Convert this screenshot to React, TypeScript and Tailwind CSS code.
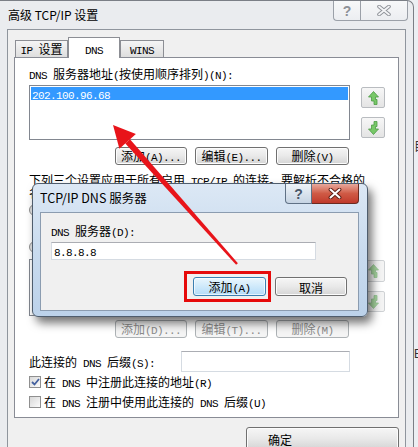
import React from "react";

function T({ s, className = "" }: { s: string; className?: string }) {
  const parts = s.split(/([\x20-\x7E]+)/).filter((p) => p.length > 0);
  return (
    <span className={`whitespace-pre ${className}`}>
      {parts.map((p, i) =>
        /^[\x20-\x7E]+$/.test(p) ? (
          <span key={i} className="font-['Liberation_Mono',monospace] text-[11px] tracking-[-0.6px]">
            {p}
          </span>
        ) : (
          <span key={i} className="font-['Noto_Sans_CJK_SC',sans-serif] text-[12px]">
            {p}
          </span>
        )
      )}
    </span>
  );
}

function Btn({
  s,
  cls,
  disabled = false,
  primary = false,
}: {
  s: string;
  cls: string;
  disabled?: boolean;
  primary?: boolean;
}) {
  const look = disabled
    ? "border-[#adb2b5] bg-[#f4f4f4] text-[#8a8a8a]"
    : primary
    ? "border-[#3c7fb1] bg-linear-to-b from-[#eaf6fd] to-[#b3dcf8] shadow-[inset_0_0_0_1px_#ffffffaa] text-black"
    : "border-[#707070] bg-linear-to-b from-[#f6f6f6] via-[#e9e9e9] to-[#d5d5d5] shadow-[inset_0_0_0_1px_#fcfcfc] text-black";
  return (
    <div className={`shrink-0 rounded-[3px] border flex items-center justify-center leading-[12px] ${cls} ${look}`}>
      <T s={s} />
    </div>
  );
}

function UpIcon({ faded = false }: { faded?: boolean }) {
  return (
    <svg width="11" height="14" viewBox="0 0 11 14">
      <path
        d="M5.5 0.5 L10.5 6 L7.5 6 L7.5 8.5 L9 8.5 L9 13.5 L6 13.5 L6 10 L3.5 10 L3.5 6 L0.5 6 Z"
        fill={faded ? "#a8d8a0" : "#78c868"}
        stroke={faded ? "#97c695" : "#4b9a45"}
        strokeWidth="0.8"
      />
    </svg>
  );
}

function DownIcon({ faded = false }: { faded?: boolean }) {
  return (
    <svg width="11" height="14" viewBox="0 0 11 14">
      <path
        d="M5.5 13.5 L10.5 8 L7.5 8 L7.5 5.5 L9 5.5 L9 0.5 L6 0.5 L6 4 L3.5 4 L3.5 8 L0.5 8 Z"
        fill={faded ? "#a8d8a0" : "#78c868"}
        stroke={faded ? "#97c695" : "#4b9a45"}
        strokeWidth="0.8"
      />
    </svg>
  );
}

function ArrowBtn({ up, faded = false, cls }: { up: boolean; faded?: boolean; cls: string }) {
  return (
    <div
      className={`w-[24px] rounded-[2px] border flex items-center justify-center ${cls} ${
        faded ? "border-[#cfd2d5] bg-[#f4f4f4]" : "border-[#b9bcc0] bg-linear-to-b from-[#f7f7f7] to-[#e4e4e4]"
      }`}
    >
      {up ? <UpIcon faded={faded} /> : <DownIcon faded={faded} />}
    </div>
  );
}

function Check({ checked = false }: { checked?: boolean }) {
  return (
    <div className="shrink-0 w-[12px] h-[12px] border border-[#8f8f8f] bg-linear-to-br from-[#d8d8d8] to-[#fbfbfb] flex items-center justify-center">
      {checked && (
        <svg width="9" height="8" viewBox="0 0 9 8">
          <path d="M1 4 L3.5 6.5 L8 1" fill="none" stroke="#44619f" strokeWidth="1.8" />
        </svg>
      )}
    </div>
  );
}

function Radio({ on = false }: { on?: boolean }) {
  return (
    <div className="shrink-0 w-[12px] h-[12px] rounded-full border border-[#8f8f8f] bg-linear-to-br from-[#d8d8d8] to-[#fbfbfb] flex items-center justify-center">
      {on && <div className="w-[5px] h-[5px] rounded-full bg-[#3d5a98]" />}
    </div>
  );
}

export default function App() {
  return (
    <div className="relative w-[418px] h-[447px] overflow-hidden bg-[#eef0f3] text-black font-['Noto_Sans_CJK_SC',sans-serif]">
      <div className="flex h-full">
        {/* Main window */}
        <div className="w-[414px] h-[470px] shrink-0 flex flex-col bg-[#eaecef] border-t border-r border-[#7b7f86] rounded-tr-[7px]">
          {/* Title bar */}
          <div className="h-[28px] flex items-start">
            <div className="pl-[8px] pt-[7px] text-[12px] leading-[14px] text-black">高级 TCP/IP 设置</div>
            <div className="ml-auto mr-[5px] flex h-[20px]">
              <div className="w-[27px] h-[20px] border-l border-b border-[#9ba0a8] rounded-bl-[4px] bg-linear-to-b from-[#f7f8f9] to-[#eceef1] flex items-center justify-center">
                <span className="font-['Liberation_Sans',sans-serif] font-bold text-[14px] leading-[14px] text-[#8d9197]">?</span>
              </div>
              <div className="w-[48px] h-[20px] border-l border-r border-b border-[#9ba0a8] rounded-br-[4px] bg-linear-to-b from-[#f7f8f9] to-[#eceef1] flex items-center justify-center">
                <svg width="14" height="11" viewBox="0 0 14 11">
                  <path d="M2 1.5 L12 9.5 M12 1.5 L2 9.5" stroke="#8d9197" strokeWidth="3.6" strokeLinecap="round" />
                  <path d="M2 1.5 L12 9.5 M12 1.5 L2 9.5" stroke="#f4f5f7" strokeWidth="1.8" strokeLinecap="round" />
                </svg>
              </div>
            </div>
          </div>

          {/* Client area */}
          <div className="mx-[7px] flex-1 flex flex-col border border-[#8f959d] bg-[#f0f0f0]">
            {/* Tabs */}
            <div className="h-[27px] flex items-end pl-[7px]">
              <div className="w-[53px] h-[17px] border border-b-0 border-[#8c8e94] bg-linear-to-b from-[#f5f5f5] to-[#dedede] flex items-center justify-center leading-[12px]">
                <T s="IP 设置" />
              </div>
              <div className="relative z-10 -mb-px w-[52px] h-[21px] border border-b-0 border-[#8c8e94] bg-white flex items-start justify-center pt-[3px] leading-[12px]">
                <T s="DNS" />
              </div>
              <div className="w-[44px] h-[17px] border border-b-0 border-[#8c8e94] bg-linear-to-b from-[#f5f5f5] to-[#dedede] flex items-center justify-center leading-[12px]">
                <T s="WINS" />
              </div>
            </div>

            {/* Tab panel */}
            <div className="mx-[6px] border border-[#898c95] bg-white flex flex-col pl-[14px] pt-[10px] pb-[9px]">
              <div className="h-[12px] leading-[12px] flex items-center">
                <T s="DNS 服务器地址(按使用顺序排列)(N):" />
              </div>

              <div className="mt-[5px] flex">
                <div className="w-[321px] h-[55px] border border-[#828790] bg-white p-[1px]">
                  <div className="h-[13px] bg-[#3399ff] text-white pl-[1px] flex items-center leading-[12px]">
                    <T s="202.100.96.68" />
                  </div>
                </div>
                <div className="ml-[11px] pt-[2px] flex flex-col gap-[9px]">
                  <ArrowBtn up cls="h-[21px]" />
                  <ArrowBtn up={false} cls="h-[21px]" />
                </div>
              </div>

              <div className="mt-[7px] flex pl-[86px] gap-[8px]">
                <Btn s="添加(A)..." cls="w-[72px] h-[18px]" />
                <Btn s="编辑(E)..." cls="w-[73px] h-[18px]" />
                <Btn s="删除(V)" cls="w-[73px] h-[18px]" />
              </div>

              <div className="mt-[9px] flex flex-col">
                <div className="h-[13px] leading-[13px] flex items-center">
                  <T s="下列三个设置应用于所有启用 TCP/IP 的连接。要解析不合格的" />
                </div>
                <div className="h-[13px] leading-[13px] flex items-center">
                  <T s="名称，DNS 解析将使用以下设置:" />
                </div>
              </div>

              <div className="mt-[4px] h-[12px] flex items-center gap-[4px] leading-[12px]">
                <Radio on />
                <T s="附加主要的和连接特定的 DNS 后缀(P)" />
              </div>
              <div className="mt-[6px] h-[12px] pl-[16px] flex items-center gap-[4px] leading-[12px]">
                <Check checked />
                <T s="附加主 DNS 后缀的父后缀(X)" />
              </div>
              <div className="mt-[7px] h-[12px] flex items-center gap-[4px] leading-[12px]">
                <Radio />
                <T s="附加这些 DNS 后缀(按顺序)(H):" />
              </div>

              <div className="mt-[6px] flex">
                <div className="w-[321px] h-[57px] border border-[#828790] bg-white" />
                <div className="ml-[11px] pt-[1px] flex flex-col gap-[9px]">
                  <ArrowBtn up faded cls="h-[22px]" />
                  <ArrowBtn up={false} faded cls="h-[21px]" />
                </div>
              </div>

              <div className="mt-[4px] flex pl-[86px] gap-[8px]">
                <Btn s="添加(D)..." cls="w-[72px] h-[18px]" disabled />
                <Btn s="编辑(T)..." cls="w-[73px] h-[18px]" disabled />
                <Btn s="删除(M)" cls="w-[73px] h-[18px]" disabled />
              </div>

              <div className="mt-[13px] h-[21px] flex items-center leading-[12px]">
                <div className="w-[152px]">
                  <T s="此连接的 DNS 后缀(S):" />
                </div>
                <div className="w-[169px] h-[21px] border border-[#d5dbe2] border-t-[#abadb3] bg-white" />
              </div>

              <div className="mt-[3px] h-[13px] flex items-center gap-[3px] leading-[12px]">
                <Check checked />
                <T s="在 DNS 中注册此连接的地址(R)" />
              </div>
              <div className="mt-[7px] h-[13px] flex items-center gap-[3px] leading-[12px]">
                <Check />
                <T s="在 DNS 注册中使用此连接的 DNS 后缀(U)" />
              </div>
            </div>

            <div className="mt-[9px] flex justify-end pr-[6px]">
              <div className="w-[153px] h-[23px] rounded-[3px] border border-[#707070] bg-linear-to-b from-[#f6f6f6] via-[#e9e9e9] to-[#d5d5d5] shadow-[inset_0_0_0_1px_#fcfcfc] flex items-center pl-[21px] leading-[12px]">
                <T s="确定" />
              </div>
            </div>
          </div>
        </div>

        {/* Background strip on the right */}
        <div className="flex-1 flex flex-col bg-[#eceff3] overflow-hidden">
          <div className="mt-[139px] text-[12px] leading-[14px] text-[#333]">目</div>
          <div className="mt-[195px] text-[12px] leading-[14px] text-[#333] font-['Liberation_Mono',monospace]">E</div>
        </div>
      </div>

      {/* TCP/IP DNS 服务器 dialog */}
      <div className="absolute left-[32px] top-[183px] w-[336px] h-[134px] rounded-[6px] border border-[#4f5d6d] bg-linear-to-b from-[#dce8f5] via-[#c9dbee] to-[#bcd2ea] shadow-[4px_6px_10px_rgba(0,0,0,0.55)] flex flex-col">
        <div className="h-[28px] flex items-start">
          <div className="self-center pl-[7px] text-[12.5px] leading-[14px] text-black">TCP/IP DNS 服务器</div>
          <div className="ml-auto mr-[8px] flex h-[20px]">
            <div className="w-[27px] h-[20px] border border-t-0 border-[#5f7185] rounded-bl-[4px] bg-linear-to-b from-[#eef3f8] to-[#c6d4e3] flex items-center justify-center">
              <span className="font-['Liberation_Sans',sans-serif] font-bold text-[14px] leading-[14px] text-[#4a5869]">?</span>
            </div>
            <div className="w-[47px] h-[20px] border border-l-0 border-t-0 border-[#6b2a20] rounded-br-[4px] bg-linear-to-b from-[#e6a89c] via-[#cf5a45] to-[#c0392b] flex items-center justify-center">
              <svg width="14" height="11" viewBox="0 0 14 11">
                <path d="M2.5 1.5 L11.5 9.5 M11.5 1.5 L2.5 9.5" stroke="#5a1d14" strokeWidth="3.8" strokeLinecap="round" />
                <path d="M2.5 1.5 L11.5 9.5 M11.5 1.5 L2.5 9.5" stroke="#ffffff" strokeWidth="2" strokeLinecap="round" />
              </svg>
            </div>
          </div>
        </div>
        <div className="ml-[7px] mr-[8px] h-[99px] border border-[#8b9cb0] bg-[#f0f0f0] flex flex-col pl-[10px] pt-[12px]">
          <div className="h-[12px] leading-[12px] flex items-center">
            <T s="DNS 服务器(D):" />
          </div>
          <div className="mt-[5px] w-[265px] h-[18px] border border-[#d5dbe2] border-t-[#abadb3] bg-white flex items-center pl-[2px] leading-[12px]">
            <T s="8.8.8.8" />
          </div>
          <div className="mt-[17px] flex pl-[142px] gap-[9px]">
            <Btn s="添加(A)" cls="w-[73px] h-[19px]" primary />
            <Btn s="取消" cls="w-[72px] h-[19px]" />
          </div>
        </div>
      </div>

      {/* Red highlight box */}
      <div className="absolute left-[184px] top-[271px] w-[87px] h-[31px] border-[3px] border-[#e60a0a]" />

      {/* Red arrow */}
      <svg className="absolute left-0 top-0 pointer-events-none" width="418" height="447" viewBox="0 0 418 447">
        <polygon points="130.0,139.3 125.3,143.5 236.1,264.8 237.9,263.2" fill="#e8141a" />
        <polygon points="113,125 135.9,134.1 119.4,148.7" fill="#e8141a" />
      </svg>
    </div>
  );
}
